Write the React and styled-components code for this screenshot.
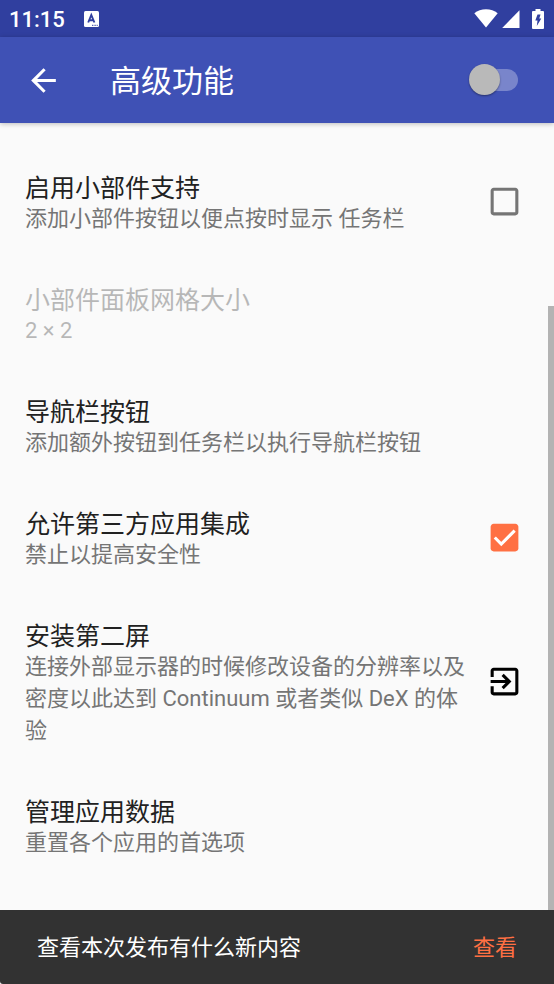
import React, { useState } from 'react'
import styled, { createGlobalStyle, css } from 'styled-components'

const GlobalStyle = createGlobalStyle`
    * {
        box-sizing: border-box;
    }
    body {
        margin: 0;
        background: #fafafa;
        font-family: Roboto, 'Noto Sans CJK SC', sans-serif;
    }
    button {
        padding: 0;
        border: none;
        background: none;
        font: inherit;
        color: inherit;
        text-align: left;
        cursor: pointer;
    }
`
const Page = styled.div`
    display: flex;
    flex-direction: column;
    height: 100vh;
`
const StatusBar = styled.div`
    display: flex;
    align-items: center;
    flex: none;
    height: 37px;
    padding: 0 10px 0 9px;
    background: #303f9f;
    color: #fff;
`
const Clock = styled.time`
    margin-right: 19px;
    padding-top: 2px;
    font-size: 22px;
    font-weight: 500;
    line-height: 35px;
`
const StatusIcons = styled.div`
    display: flex;
    align-items: center;
    margin-left: auto;
`
const Battery = styled.svg`
    margin-left: 12px;
`
const Signal = styled.svg`
    margin-left: 4px;
`
const Toolbar = styled.header`
    display: flex;
    align-items: center;
    flex: none;
    height: 86px;
    padding: 0 36px 0 25px;
    background: #3f51b5;
    color: #fff;
    box-shadow: 0 1px 5px rgba(0, 0, 0, 0.25);
    z-index: 1;
`
const Icon = styled.svg`
    display: block;
    flex: none;
    width: 37px;
    height: 37px;
    fill: currentColor;
`
const Heading = styled.h1`
    flex: 1;
    margin: 0 0 0 48px;
    padding-top: 4px;
    font-size: 31px;
    font-weight: 400;
    line-height: 40px;
`
const Switch = styled.input`
    appearance: none;
    position: relative;
    width: 44px;
    height: 22px;
    margin: 0;
    border-radius: 11px;
    background: rgba(255, 255, 255, 0.3);
    cursor: pointer;
    &::after {
        content: '';
        position: absolute;
        top: -5px;
        left: ${props => props.checked ? '18px' : '-5px'};
        width: 31px;
        height: 31px;
        border-radius: 50%;
        background: ${props => props.checked ? '#ff7043' : '#b9b9b9'};
        box-shadow: 0 1px 2px rgba(0, 0, 0, 0.4);
    }
`
const Content = styled.main`
    position: relative;
    flex: 1;
    min-height: 0;
    overflow: hidden;
`
const List = styled.div`
    display: flex;
    flex-direction: column;
    padding-top: 22px;
`
const ScrollThumb = styled.div`
    position: absolute;
    top: 183px;
    right: 0;
    bottom: 0;
    width: 6px;
    background: #b3b3b3;
`
const rowStyle = css`
    display: flex;
    align-items: center;
    gap: 16px;
    width: 100%;
    padding: 0 31px 0 25px;
    cursor: pointer;
`
const RowButton = styled.button`
    ${rowStyle}
    &:disabled {
        opacity: 0.3;
        cursor: default;
    }
`
const RowLabel = styled.label`
    ${rowStyle}
`
const RowText = styled.span`
    flex: 1;
    padding: 29px 0 22px;
`
const Title = styled.span`
    display: block;
    font-size: 25px;
    line-height: 29px;
    color: #212121;
`
const Summary = styled.span`
    display: block;
    font-size: 22px;
    line-height: 32px;
    color: ${props => props.$dim ? '#212121' : '#757575'};
`
const CheckWrap = styled.span`
    display: grid;
    flex: none;
    color: ${props => props.$checked ? '#ff7043' : '#757575'};
    & > * {
        grid-area: 1 / 1;
    }
`
const CheckInput = styled.input`
    width: 37px;
    height: 37px;
    margin: 0;
    opacity: 0;
`
const Snackbar = styled.footer`
    display: flex;
    align-items: center;
    justify-content: space-between;
    flex: none;
    height: 74px;
    padding: 2px 37px 0;
    border-bottom-left-radius: 3px;
    background: #323232;
    color: #fff;
    font-size: 22px;
    line-height: 32px;
`
const Action = styled.button`
    && {
        color: #ff7043;
    }
`

const backPath = 'M20 11H7.83l5.59-5.59L12 4l-8 8 8 8 1.41-1.41L7.83 13H20v-2z'
const exitPath = 'M10.09 15.59L11.5 17l5-5-5-5-1.41 1.41L12.67 11H3v2h9.67l-2.58 2.59zM19 3H5c-1.11 0-2 .9-2 2v4h2V5h14v14H5v-4H3v4c0 1.1.89 2 2 2h14c1.1 0 2-.9 2-2V5c0-1.1-.9-2-2-2z'
const boxPath = 'M19 5v14H5V5h14m0-2H5c-1.1 0-2 .9-2 2v14c0 1.1.9 2 2 2h14c1.1 0 2-.9 2-2V5c0-1.1-.9-2-2-2z'
const checkedPath = 'M19 3H5c-1.11 0-2 .9-2 2v14c0 1.1.89 2 2 2h14c1.11 0 2-.9 2-2V5c0-1.1-.89-2-2-2z'

const items = [
    { id: 'widgets', title: '启用小部件支持', summary: '添加小部件按钮以便点按时显示 任务栏', type: 'check' },
    { id: 'grid', title: '小部件面板网格大小', summary: '2 × 2', disabled: true },
    { id: 'navbar', title: '导航栏按钮', summary: '添加额外按钮到任务栏以执行导航栏按钮' },
    { id: 'thirdparty', title: '允许第三方应用集成', summary: '禁止以提高安全性', type: 'check' },
    { id: 'secondary', title: '安装第二屏', summary: '连接外部显示器的时候修改设备的分辨率以及密度以此达到 Continuum 或者类似 DeX 的体验', type: 'link' },
    { id: 'appdata', title: '管理应用数据', summary: '重置各个应用的首选项' },
]

function Check({ id, checked, onChange }) {
    return (
        <CheckWrap $checked={checked}>
            <Icon viewBox="0 0 24 24" aria-hidden="true">
                <path d={checked ? checkedPath : boxPath} />
                {checked && <path d="M5.7 12l4.200 4.200 8.700-8.700" fill="none" stroke="#fff" strokeWidth="2" />}
            </Icon>
            <CheckInput type="checkbox" id={id} checked={checked} onChange={onChange} />
        </CheckWrap>
    )
}

export default function App() {
    const [enabled, setEnabled] = useState(false)
    const [checks, setChecks] = useState({ widgets: false, thirdparty: true })
    const toggle = id => setChecks({ ...checks, [id]: !checks[id] })

    return (
        <Page>
            <GlobalStyle />
            <StatusBar>
                <Clock>11:15</Clock>
                <svg width="16" height="16" viewBox="0 0 16 16">
                    <rect width="15" height="16" rx="1.5" fill="#fff" />
                    <path d="M4.2 11.5L7.3 4L10.4 11.5M5.3 9.2H9.3" fill="none" stroke="#303f9f" strokeWidth="1.9" />
                    <path d="M8 14.3h6" stroke="#303f9f" strokeDasharray="1 .6" />
                </svg>
                <StatusIcons>
                    <svg width="24" height="19" viewBox="0 0 24 19">
                        <path d="M12 18.5L.3 4.2C3.6 1.6 7.5.2 12 .2s8.4 1.4 11.7 4z" fill="#fff" />
                    </svg>
                    <Signal width="18" height="18" viewBox="0 0 18 18">
                        <path d="M17.5.3V18H.2z" fill="#fff" />
                    </Signal>
                    <Battery width="12" height="20" viewBox="0 0 12 20">
                        <path d="M3.5 0h5v2H11a1 1 0 0 1 1 1v16a1 1 0 0 1-1 1H1a1 1 0 0 1-1-1V3a1 1 0 0 1 1-1h2.5z" fill="#fff" />
                        <path d="M5.500 5.500h3L7.300 9.500h2L4.800 17l.7-5.500h-2.200z" fill="#303f9f" />
                    </Battery>
                </StatusIcons>
            </StatusBar>
            <Toolbar>
                <button type="button" aria-label="返回">
                    <Icon viewBox="0 0 24 24"><path d={backPath} /></Icon>
                </button>
                <Heading>高级功能</Heading>
                <Switch
                    type="checkbox"
                    role="switch"
                    aria-label="高级功能"
                    checked={enabled}
                    onChange={() => setEnabled(!enabled)}
                />
            </Toolbar>
            <Content>
                <List>
                    {items.map(item => {
                        const text = (
                            <RowText>
                                <Title>{item.title}</Title>
                                <Summary $dim={item.disabled}>{item.summary}</Summary>
                            </RowText>
                        )
                        if (item.type === 'check') {
                            return (
                                <RowLabel key={item.id} htmlFor={item.id}>
                                    {text}
                                    <Check id={item.id} checked={checks[item.id]} onChange={() => toggle(item.id)} />
                                </RowLabel>
                            )
                        }
                        return (
                            <RowButton key={item.id} type="button" disabled={item.disabled}>
                                {text}
                                {item.type === 'link' && <Icon viewBox="0 0 24 24"><path d={exitPath} fill="#000" /></Icon>}
                            </RowButton>
                        )
                    })}
                </List>
                <ScrollThumb />
            </Content>
            <Snackbar>
                <span>查看本次发布有什么新内容</span>
                <Action type="button">查看</Action>
            </Snackbar>
        </Page>
    )
}
